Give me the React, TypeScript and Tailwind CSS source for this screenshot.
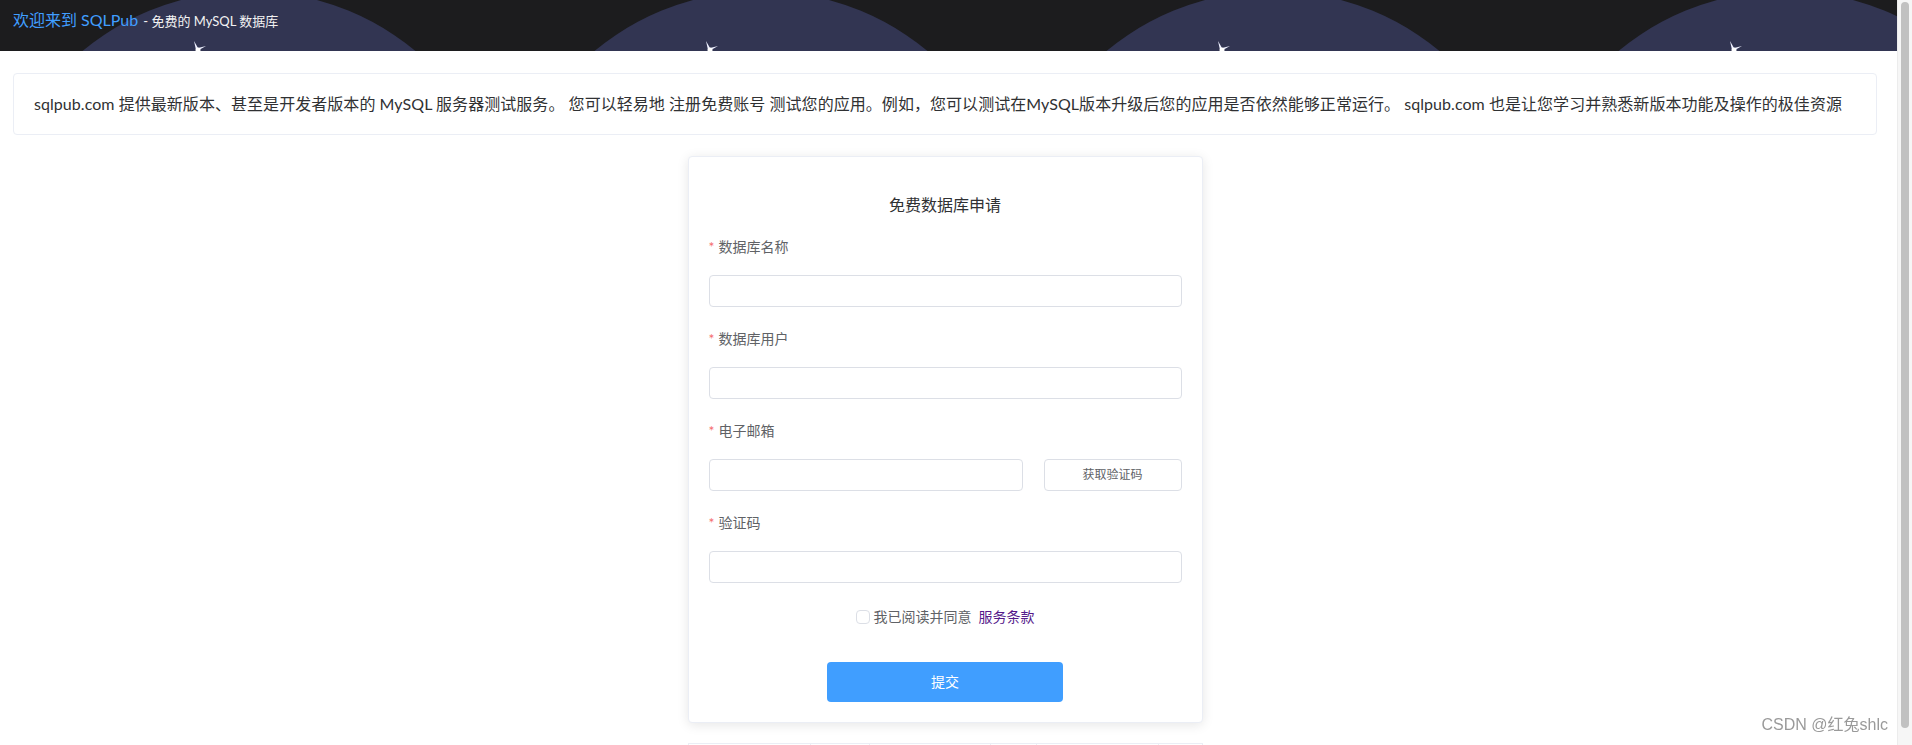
import React from "react";

const font = 'font-["Lato","Noto_Sans_CJK_SC",sans-serif]';

const circles = [249, 761, 1273, 1785];

function HeaderArt() {
  return (
    <svg className="absolute inset-0 h-full w-full" xmlns="http://www.w3.org/2000/svg">
      {circles.map((cx) => (
        <g key={cx}>
          <circle cx={cx} cy={252} r={261} fill="#323552" />
          <path
            d={`M${cx - 55} 41 L${cx - 51} 48 L${cx - 43} 46 L${cx - 50} 50 L${cx - 51} 54 L${cx - 53} 50 Z`}
            fill="#eef0ff"
          />
          <circle cx={cx - 51} cy={50} r={2.5} fill="#ffffff" />
        </g>
      ))}
    </svg>
  );
}

function Field({ label, children }: { label: string; children: React.ReactNode }) {
  return (
    <div className="mb-[22px]">
      <div className="mb-[18px] h-5 text-sm leading-5 text-[#606266]">
        <span className="mr-1 text-[#f56c6c]">*</span>
        {label}
      </div>
      {children}
    </div>
  );
}

function Input() {
  return (
    <input
      className="block h-8 w-full rounded border border-[#dcdfe6] bg-white px-3 text-sm text-[#606266] outline-none"
      type="text"
    />
  );
}

export default function App() {
  return (
    <div className={`relative flex min-h-screen bg-white ${font}`}>
      <div className="min-w-0 flex-1">
        <header className="relative h-[51px] overflow-hidden bg-[#1c1c1e]">
          <HeaderArt />
          <div className="relative flex items-baseline pl-[13px] pt-[8px] leading-6">
            <span className="text-[16px] text-[#409eff]">欢迎来到 SQLPub</span>
            <span className="ml-[5px] text-[13px] text-[#f2f2f2]">- 免费的 MySQL 数据库</span>
          </div>
        </header>

        <main className="pl-[13px] pr-[20px] pt-[22px]">
          <div className="flex h-[62px] items-center rounded border border-[#ebeef5] px-5 text-base tracking-[0.05px] text-[#303133]">
            sqlpub.com 提供最新版本、甚至是开发者版本的 MySQL 服务器测试服务。 您可以轻易地 注册免费账号 测试您的应用。例如，您可以测试在MySQL版本升级后您的应用是否依然能够正常运行。 sqlpub.com 也是让您学习并熟悉新版本功能及操作的极佳资源
          </div>

          <div className="mx-auto mt-[21px] w-[515px] rounded border border-[#ebeef5] bg-white px-5 pb-5 pt-9 shadow-[0_2px_12px_0_rgba(0,0,0,0.1)]">
            <h2 className="h-6 text-center text-base font-normal leading-6 text-[#303133]">免费数据库申请</h2>
            <form className="mt-5" onSubmit={(e) => e.preventDefault()}>
              <Field label="数据库名称">
                <Input />
              </Field>
              <Field label="数据库用户">
                <Input />
              </Field>
              <Field label="电子邮箱">
                <div className="flex gap-[21px]">
                  <div className="flex-1">
                    <Input />
                  </div>
                  <button
                    type="button"
                    className="h-8 w-[138px] rounded border border-[#dcdfe6] bg-white text-xs text-[#606266]"
                  >
                    获取验证码
                  </button>
                </div>
              </Field>
              <Field label="验证码">
                <Input />
              </Field>

              <div className="mt-6 flex h-5 items-center justify-center text-sm text-[#606266]">
                <span className="mr-[4px] inline-block h-[14px] w-[14px] rounded-sm border border-[#dcdfe6] bg-white" />
                <span>我已阅读并同意</span>
                <a className="ml-[7px] text-[#551a8b]">服务条款</a>
              </div>

              <button
                type="submit"
                className="mx-auto mt-[35px] block h-[40px] w-[236px] rounded bg-[#409eff] text-sm text-white"
              >
                提交
              </button>
            </form>
          </div>

          <div className="mx-auto mt-5 grid h-[30px] w-[515px] grid-cols-[122px_59px_121px_46px_122px_1fr] border-x border-t border-[#ebeef5]">
            <div className="border-r border-[#ebeef5]" />
            <div className="border-r border-[#ebeef5]" />
            <div className="border-r border-[#ebeef5]" />
            <div className="border-r border-[#ebeef5]" />
            <div className="border-r border-[#ebeef5]" />
            <div />
          </div>
        </main>
      </div>

      {/* page scrollbar */}
      <div className="sticky top-0 h-screen w-[15px] shrink-0 border-l border-[#ececec] bg-[#f6f6f6]">
        <div className="mx-auto mt-[2px] h-[726px] w-[8px] rounded-full bg-[#c1c1c1]" />
      </div>

      <div className='pointer-events-none fixed bottom-[8px] right-[24px] font-["Liberation_Sans","Noto_Sans_CJK_SC",sans-serif] text-[16px] text-[#9a9a9a]'>
        CSDN @红兔shlc
      </div>
    </div>
  );
}
